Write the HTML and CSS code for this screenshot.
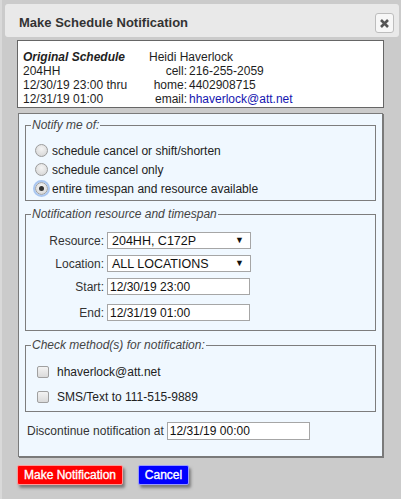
FILE: index.html
```html
<!DOCTYPE html>
<html>
<head>
<meta charset="utf-8">
<link rel="stylesheet" href="styles.css">
</head>
<body>
<div class="dialog">
  <div class="titlebar">
    <span class="title">Make Schedule Notification</span>
    <span class="close">
      <svg width="11" height="11" viewBox="0 0 11 11"><path d="M2 2 L9 9 M9 2 L2 9" stroke="#555" stroke-width="2.6" stroke-linecap="butt"/></svg>
    </span>
  </div>
  <div class="info">
    <div class="col1">
      <div class="strong">Original Schedule</div>
      <div>204HH</div>
      <div>12/30/19 23:00 thru</div>
      <div>12/31/19 01:00</div>
    </div>
    <div class="col2">
      <div class="name">Heidi Haverlock</div>
      <div class="lbl">cell:</div><div class="val">216-255-2059</div>
      <div class="lbl">home:</div><div class="val">4402908715</div>
      <div class="lbl">email:</div><div class="val"><span class="link">hhaverlock@att.net</span></div>
    </div>
  </div>
  <div class="form">
    <fieldset class="fs fs1">
      <legend>Notify me of:</legend>
      <div class="opt"><span class="radio"></span>schedule cancel or shift/shorten</div>
      <div class="opt"><span class="radio"></span>schedule cancel only</div>
      <div class="opt"><span class="radio checked"><span class="dot"></span></span>entire timespan and resource available</div>
    </fieldset>
    <fieldset class="fs fs2">
      <legend>Notification resource and timespan</legend>
      <div class="frow r1"><span class="flbl">Resource:</span><span class="sel">204HH, C172P<span class="arrow">▼</span></span></div>
      <div class="frow r2"><span class="flbl">Location:</span><span class="sel">ALL LOCATIONS<span class="arrow">▼</span></span></div>
      <div class="frow r3"><span class="flbl">Start:</span><span class="inp">12/30/19 23:00</span></div>
      <div class="frow r4"><span class="flbl">End:</span><span class="inp">12/31/19 01:00</span></div>
    </fieldset>
    <fieldset class="fs fs3">
      <legend>Check method(s) for notification:</legend>
      <div class="chk"><span class="box"></span>hhaverlock@att.net</div>
      <div class="chk"><span class="box"></span>SMS/Text to 111-515-9889</div>
    </fieldset>
    <div class="disc">Discontinue notification at <span class="inp dinp">12/31/19 00:00</span></div>
  </div>
  <div class="buttons">
    <span class="btn red">Make Notification</span>
    <span class="btn blue">Cancel</span>
  </div>
</div>
</body>
</html>
```
FILE: styles.css
```css
* { box-sizing: border-box; }
html, body { margin: 0; padding: 0; }
body {
  width: 401px;
  height: 499px;
  overflow: hidden;
  background: #cbcbcb;
  font-family: "Liberation Sans", Arial, sans-serif;
  font-size: 12px;
  color: #222;
}
.dialog {
  width: 401px;
  height: 499px;
  padding-top: 4px;
  border-left: 2px solid #d9d9d9;
}
.titlebar {
  display: flex;
  justify-content: space-between;
  align-items: flex-start;
  height: 33px;
  margin: 0 2px 0 3px;
  padding: 0 5px 0 14px;
  background: #e9e9e9;
  border-radius: 3px;
}
.title {
  font-size: 13px;
  font-weight: bold;
  color: #333;
  line-height: 15px;
  margin-top: 11px;
}
.close {
  display: flex;
  align-items: center;
  justify-content: center;
  width: 19px;
  height: 20px;
  margin-top: 9px;
  background: #f7f7f7;
  border: 1px solid #bdbdbd;
  border-radius: 3px;
}
.info {
  display: flex;
  width: 367px;
  margin: 3px 0 0 15px;
  padding: 9px 5px 1px;
  background: #fff;
  border: 1px solid #666;
  line-height: 14px;
  color: #1e1e1e;
}
.col1 { width: 126px; }
.strong { font-weight: bold; font-style: italic; }
.col2 {
  display: grid;
  grid-template-columns: 38px auto;
  column-gap: 2px;
}
.name { grid-column: 1 / 3; }
.lbl { text-align: right; }
.link { color: #1515b0; }
.form {
  width: 365px;
  margin: 5px 0 0 16px;
  padding: 4px 6px 16px;
  background: #f0f8ff;
  border: 1px solid #7a7a7a;
  box-shadow: 1px 1px 0 #7a7a7a;
}
.fs {
  margin: 0;
  min-width: 0;
  border: 1px solid #7d7d7d;
  padding: 0;
}
.fs legend {
  font-style: italic;
  color: #444;
  line-height: 14px;
  padding: 0 1px;
  margin-left: 5px;
}
.fs1 { padding: 9px 0 2px 0; }
.opt {
  display: flex;
  align-items: center;
  height: 19px;
  color: #222;
}
.radio {
  position: relative;
  display: inline-block;
  width: 13px;
  height: 13px;
  margin: 0 4px 0 9px;
  border-radius: 50%;
  border: 1px solid #9c9c9c;
  background: radial-gradient(circle at 50% 35%, #f4f4f4 0%, #dcdcdc 70%, #cfcfcf 100%);
}
.radio.checked {
  outline: 2px solid #a9c6f0;
  outline-offset: 0;
}
.radio .dot {
  position: absolute;
  left: 3px; top: 3px;
  width: 5px; height: 5px;
  border-radius: 50%;
  background: #333;
}
.fs2 { margin-top: 6px; padding: 11px 0 9px 0; }
.frow {
  display: flex;
  align-items: center;
  height: 17px;
}
.r2, .r3 { margin-top: 6px; }
.r4 { margin-top: 9px; }
.flbl {
  width: 78px;
  text-align: right;
  margin-right: 3px;
  color: #333;
}
.sel {
  position: relative;
  display: flex;
  align-items: center;
  width: 144px;
  height: 17px;
  padding-left: 4px;
  background: #fff;
  border: 1px solid #a6a6a6;
  color: #111;
  font-size: 12.5px;
}
.arrow {
  position: absolute;
  right: 6px;
  top: 2px;
  font-size: 9px;
  color: #111;
}
.inp {
  display: flex;
  align-items: center;
  width: 143px;
  height: 17px;
  padding-left: 2px;
  background: #fff;
  border: 1px solid #a6a6a6;
  color: #111;
}
.fs3 { margin-top: 7px; padding: 10px 0 4px 0; }
.chk {
  display: flex;
  align-items: center;
  height: 20px;
  color: #222;
}
.chk + .chk { margin-top: 5px; }
.box {
  display: inline-block;
  width: 12px;
  height: 12px;
  margin: 0 8px 0 11px;
  border: 1px solid #a0a0a0;
  border-radius: 2px;
  background: linear-gradient(#f3f3f3, #dadada);
}
.disc {
  display: flex;
  align-items: center;
  margin: 10px 0 0 2px;
  height: 18px;
  color: #333;
}
.dinp { height: 18px; margin-left: 3px; }
.buttons {
  display: flex;
  gap: 15px;
  margin: 8px 0 0 15px;
}
.btn {
  display: inline-flex;
  align-items: center;
  justify-content: center;
  height: 20px;
  padding: 0;
  white-space: nowrap;
  color: #fff;
  font-size: 12px;
  -webkit-text-stroke: 0.35px #fff;
  box-shadow: 2px 3px 3px #7d7d7d;
  border-radius: 2px;
}
.red { width: 106px; background: #ff0000; border: 1px solid #ff9a9a; }
.blue { width: 51px; background: #0000ff; border: 1px solid #9a9aff; }
```
